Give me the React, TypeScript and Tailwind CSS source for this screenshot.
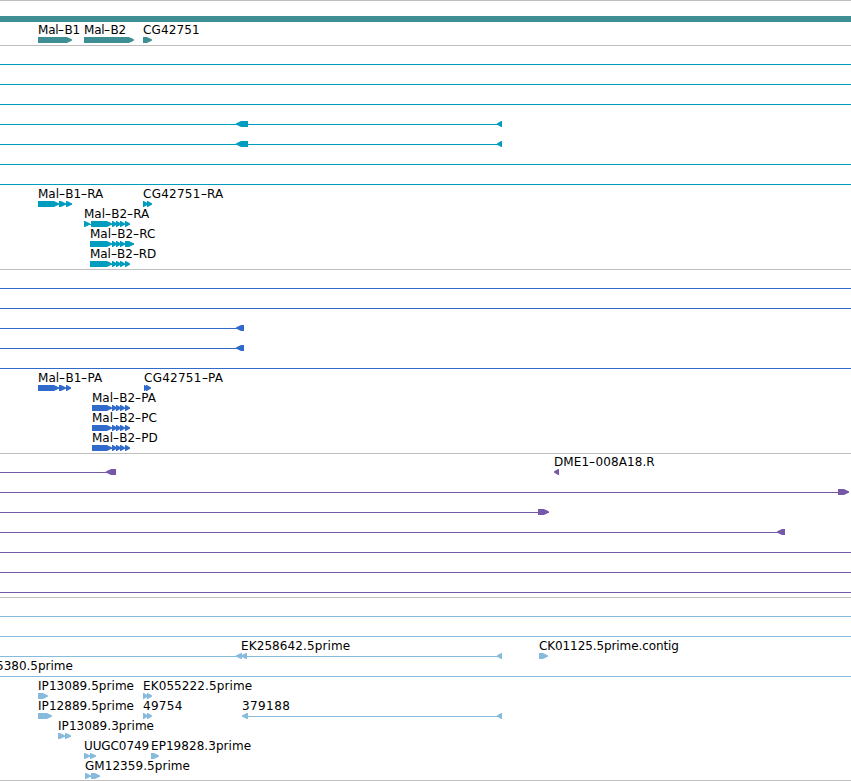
import { Fragment } from "react";

type Direction = "left" | "right";

interface Label {
  x: number;
  text: string;
  spacing?: number;
}

interface Exon {
  from: number;
  to: number;
  dir: Direction;
}

interface Row {
  labels?: Label[];
  // connecting lines (introns), [from, to]
  lines?: [number, number][];
  exons?: Exon[];
  solid?: boolean;
}

interface Track {
  name: string;
  color: string;
  className: string;
  rows: Row[];
}

const WIDTH = 851;

const right = (...parts: [number, number][]): Exon[] =>
  parts.map(([from, to]) => ({ from, to, dir: "right" }));

const left = (...parts: [number, number][]): Exon[] =>
  parts.map(([from, to]) => ({ from, to, dir: "left" }));

const fullLine: Row = { lines: [[0, WIDTH]] };

const malB2Tail: [number, number][] = [
  [112, 117],
  [116, 121],
  [120, 125],
  [125, 130],
];

const tracks: Track[] = [
  {
    name: "genes",
    color: "#3e8e94",
    className: "gap-px pb-0.5",
    rows: [
      { solid: true },
      {
        labels: [
          { x: 38, text: "Mal-B1", spacing: -0.2 },
          { x: 84, text: "Mal-B2", spacing: -0.2 },
          { x: 143, text: "CG42751", spacing: 0.15 },
        ],
        exons: right([38, 72], [84, 134], [143, 152]),
      },
    ],
  },
  {
    name: "transcripts",
    color: "#009dbf",
    className: "pb-0.5",
    rows: [
      fullLine,
      fullLine,
      fullLine,
      { lines: [[0, 502]], exons: left([236, 248], [497, 502]) },
      { lines: [[0, 502]], exons: left([236, 248], [497, 502]) },
      fullLine,
      fullLine,
      {
        labels: [
          { x: 38, text: "Mal-B1-RA" },
          { x: 143, text: "CG42751-RA", spacing: 0.25 },
        ],
        lines: [
          [38, 72],
          [143, 152],
        ],
        exons: right([38, 59], [59, 66], [66, 72], [143, 148], [147, 152]),
      },
      {
        labels: [{ x: 84, text: "Mal-B2-RA" }],
        lines: [[84, 130]],
        exons: right([84, 90], [91, 112], ...malB2Tail),
      },
      {
        labels: [{ x: 90, text: "Mal-B2-RC" }],
        lines: [[90, 134]],
        exons: right([90, 112], ...malB2Tail.slice(0, 3), [125, 134]),
      },
      {
        labels: [{ x: 90, text: "Mal-B2-RD", spacing: -0.05 }],
        lines: [[90, 130]],
        exons: right([90, 112], ...malB2Tail),
      },
    ],
  },
  {
    name: "proteins",
    color: "#306bcb",
    className: "pb-0.5",
    rows: [
      fullLine,
      fullLine,
      { lines: [[0, 244]], exons: left([236, 244]) },
      { lines: [[0, 244]], exons: left([236, 244]) },
      fullLine,
      {
        labels: [
          { x: 38, text: "Mal-B1-PA", spacing: 0.05 },
          { x: 144, text: "CG42751-PA", spacing: 0.25 },
        ],
        lines: [[38, 71]],
        exons: right([38, 59], [59, 66], [66, 71], [144, 148], [146, 151]),
      },
      ...["Mal-B2-PA", "Mal-B2-PC", "Mal-B2-PD"].map((text) => ({
        labels: [{ x: 92, text }],
        lines: [[92, 130]] as [number, number][],
        exons: right([92, 112], ...malB2Tail),
      })),
    ],
  },
  {
    name: "clones",
    color: "#7658a8",
    className: "pb-0.5",
    rows: [
      {
        labels: [{ x: 554, text: "DME1-008A18.R", spacing: 0.1 }],
        lines: [[0, 116]],
        exons: left([106, 116], [554, 559]),
      },
      { lines: [[0, 849]], exons: right([838, 849]) },
      { lines: [[0, 549]], exons: right([538, 549]) },
      { lines: [[0, 785]], exons: left([777, 785]) },
      fullLine,
      fullLine,
      fullLine,
    ],
  },
  {
    name: "ests",
    color: "#86bbdd",
    className: "pb-px",
    rows: [
      fullLine,
      fullLine,
      {
        labels: [
          { x: 241, text: "EK258642.5prime", spacing: 0.1 },
          { x: 539, text: "CK01125.5prime.contig", spacing: -0.1 },
        ],
        lines: [[0, 502]],
        exons: [
          ...left([236, 242], [241, 247], [497, 502]),
          ...right([539, 548]),
        ],
      },
      { labels: [{ x: -4, text: "5380.5prime" }], lines: [[0, WIDTH]] },
      {
        labels: [
          { x: 38, text: "IP13089.5prime", spacing: 0.05 },
          { x: 143, text: "EK055222.5prime", spacing: 0.1 },
        ],
        exons: right([38, 48], [143, 148], [147, 152]),
      },
      {
        labels: [
          { x: 38, text: "IP12889.5prime", spacing: 0.05 },
          { x: 143, text: "49754", spacing: 0.3 },
          { x: 242, text: "379188", spacing: 0.4 },
        ],
        lines: [[242, 502]],
        exons: [
          ...right([38, 52], [143, 148], [147, 152]),
          ...left([242, 248], [497, 502]),
        ],
      },
      {
        labels: [{ x: 58, text: "IP13089.3prime", spacing: 0.05 }],
        lines: [[58, 71]],
        exons: right([58, 65], [65, 71]),
      },
      {
        labels: [
          { x: 84, text: "UUGC0749", spacing: -0.1 },
          { x: 151, text: "EP19828.3prime", spacing: 0.05 },
        ],
        lines: [[84, 96]],
        exons: right([84, 90], [90, 96], [151, 159]),
      },
      {
        labels: [{ x: 85, text: "GM12359.5prime", spacing: 0.05 }],
        lines: [[85, 100]],
        exons: right([85, 91], [91, 100]),
      },
    ],
  },
];

// block with a slightly rounded arrow tip, at most 6px long
const exonPoints = ({ from, to, dir }: Exon) => {
  const sign = dir === "right" ? 1 : -1;
  const head = dir === "right" ? to : from;
  const tail = dir === "right" ? from : to;
  const tip = Math.min(6, to - from);
  const at = (back: number, y: number) => `${head - sign * back},${y}`;

  return [
    `${tail},0`,
    at(tip * 0.85, 0),
    at(tip * 0.4, 1.2),
    at(0, 2.5),
    at(0, 3.4),
    at(tip * 0.4, 4.8),
    at(tip * 0.85, 6),
    `${tail},6`,
  ].join(" ");
};

const FeatureLabel = ({ x, text, spacing = 0 }: Label) => (
  <span
    className="absolute top-0 whitespace-nowrap"
    style={{ left: x, letterSpacing: spacing }}
  >
    {text.split("-").map((part, i) => (
      <Fragment key={i}>
        {i > 0 && (
          <span className="inline-block scale-x-150 px-[0.9px]">-</span>
        )}
        {part}
      </Fragment>
    ))}
  </span>
);

const FeatureRow = ({ row, color }: { row: Row; color: string }) => (
  <div className="flex h-5 flex-col">
    <div className="relative h-3.5">
      {row.labels?.map((label) => (
        <FeatureLabel key={label.text} {...label} />
      ))}
    </div>

    <svg className="block h-1.5 w-[851px]" viewBox="0 0 851 6" fill={color}>
      {row.solid && <rect width={WIDTH} height="6" />}
      {row.lines?.map(([from, to]) => (
        <rect key={from} x={from} y="3" width={to - from} height="1" />
      ))}
      {row.exons?.map((exon) => (
        <polygon key={exon.from} points={exonPoints(exon)} />
      ))}
    </svg>
  </div>
);

const App = () => {
  return (
    <main className="h-[781px] w-[851px] overflow-hidden border-b border-[#bfbfbf] bg-white font-['DejaVu_Sans',sans-serif] text-[12px] leading-[14px] text-black">
      {tracks.map((track) => (
        <section
          key={track.name}
          className={`flex flex-col border-t border-[#bfbfbf] pt-px ${track.className}`}
        >
          {track.rows.map((row, i) => (
            <FeatureRow key={i} row={row} color={track.color} />
          ))}
        </section>
      ))}
    </main>
  );
};

export default App;
